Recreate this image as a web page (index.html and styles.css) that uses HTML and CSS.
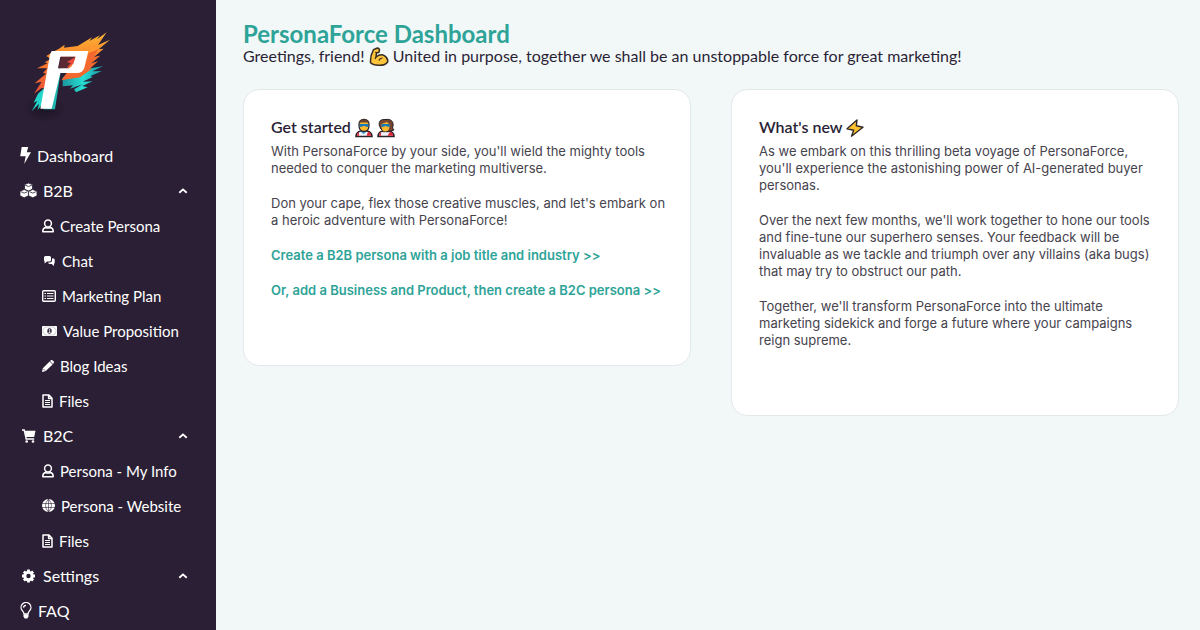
FILE: index.html
```html
<!DOCTYPE html>
<html lang="en">
<head>
<meta charset="utf-8">
<title>PersonaForce Dashboard</title>
<link rel="stylesheet" href="styles.css">
</head>
<body>
<svg class="defs" aria-hidden="true">
  <symbol id="person" viewBox="0 0 12 14"><g fill="none" stroke="currentColor" stroke-width="1.5"><circle cx="6" cy="4.500" r="3.400"/><path d="M3.600 8.500C1.600 8.900.8 10.200.8 12v.8h10.400V12c0-1.800-.8-3.100-2.800-3.500Q6 9.700 3.600 8.500z" stroke-linejoin="round"/></g></symbol>
  <symbol id="file" viewBox="0 0 11 14"><path d="M1 1h6l3 3.200V13H1zM6.600 1v3.500H10" fill="none" stroke="currentColor" stroke-width="1.500" stroke-linejoin="round"/><path d="M3 6.500h5M3 8.500h5M3 10.500h5" stroke="currentColor"/></symbol>
  <symbol id="chevron" viewBox="0 0 10 6"><path d="M1.300 4.700 5 1.400l3.700 3.300" fill="none" stroke="currentColor" stroke-width="1.900"/></symbol>
</svg>
<div class="app">
  <aside class="sidebar">
    <a class="logo" href="#" aria-label="PersonaForce">
      <svg width="100" height="105" viewBox="0 0 300 315">
        <defs>
          <linearGradient id="flame" x1="0" y1="0" x2="0" y2="1"><stop offset="0" stop-color="#fbb633"/><stop offset=".5" stop-color="#fb7a2c"/><stop offset="1" stop-color="#e94f37"/></linearGradient>
          <linearGradient id="teal" x1="0" y1="0" x2="1" y2="0"><stop offset="0" stop-color="#1c979c"/><stop offset=".5" stop-color="#26dfd3"/><stop offset="1" stop-color="#1a91a2"/></linearGradient>
          <radialGradient id="shade"><stop offset="0" stop-color="#15121f" stop-opacity=".8"/><stop offset="1" stop-color="#15121f" stop-opacity="0"/></radialGradient>
        </defs>
        <ellipse cx="75" cy="265" rx="65" ry="42" fill="url(#shade)"/>
        <path d="M128 172 184 150 250 138 217 154 246 153 211 168 218 171 188 185 218 184 187 198 203 202 168 217 162 208 188 193 150 206 159 196 128 199z" fill="url(#teal)"/>
        <path d="M72 205 54 221 41 248 52 243 35 274 57 251 53 270 69 250z" fill="#22d5ca"/>
        <path d="M79 108 98 96 117 86 134 74 132 83 173 78 216 52 208 63 240 46 231 58 260 37 234 75 270 59 236 88 251 86 221 112 240 107 211 132 233 124 205 150 218 145 179 172 124 181 136 164 154 143 140 145 158 127 140 133 158 122 164 110 111 110 83 206 65 204 42 221 65 185 44 190 78 161 69 158 82 145 51 145 83 130 74 127 92 117z" fill="url(#flame)"/>
        <path d="M205 95 244 52 217 87 232 82 196 135z" fill="#ff9d2e" opacity=".7"/>
        <path d="M99 100 121 163 105 268H70L93 107z" fill="#21b7b2"/>
        <path d="M205 100 235 88 221 112 240 107 211 132 233 124 205 150 218 145 179 172 130 176 193 145z" fill="#f3682f"/>
        <path fill-rule="evenodd" d="M95 93H205L193 143Q188 159 171 159H121L95 266H61L90 104zM121 110H167L161 126Q156 142 146 145H114z" fill="#fff"/>
        <path d="M123 110h43l-5 15-22 3 14 3-10 12-27 2z" fill="#5b2934"/>
        <path d="M140 127 165 112 160 131 139 143 153 129z" fill="#ed4a3e"/>
      </svg>
    </a>
    <nav class="nav" aria-label="Main">
      <a class="item" href="#"><svg width="11" height="17" viewBox="0 0 11 17"><path d="M1.700 0h6.500L6.800 5.300H11L4.200 17l1.500-7.700H.2z" fill="currentColor"/></svg>Dashboard</a>
      <button class="item" type="button" aria-expanded="true"><svg width="17" height="15" viewBox="0 0 17 15"><g fill="currentColor" stroke="#2b1f35" stroke-width=".8"><path d="m8.500 0 4 1.600v4.600l-4 1.900-4-1.900V1.600z"/><path d="m4.200 6.500 4.200 1.700v4.600l-4.200 2-4.200-2V8.200z"/><path d="m12.800 6.500 4.200 1.700v4.600l-4.200 2-4.200-2V8.200z"/><path d="m5 2 3.500 1.500L12 2M1 8.700l3.200 1.400 3.200-1.400M9.600 8.700l3.200 1.400L16 8.700" fill="none"/></g></svg>B2B<svg class="chevron" width="10" height="6"><use href="#chevron"/></svg></button>
      <div class="group">
        <a class="subitem" href="#"><svg width="12" height="14"><use href="#person"/></svg>Create Persona</a>
        <a class="subitem" href="#"><svg width="14" height="12" viewBox="0 0 14 12"><path d="M3.500 1h4Q9 1 9 2.500V5Q9 6.500 7.500 6.500H5L2.600 8.600V6.400Q2 6 2 5V2.500Q2 1 3.500 1z" fill="currentColor"/><path d="M10 3.500h1.300q1.400 0 1.400 1.400v2.500q0 1-.7 1.300V11L9.700 8.900H7.500Q6.200 8.900 6.200 7.500h1.700Q10 7.500 10 5.400z" fill="currentColor"/></svg>Chat</a>
        <a class="subitem" href="#"><svg width="14" height="12" viewBox="0 0 14 12"><rect x=".7" y=".7" width="12.600" height="10.600" rx="1" fill="none" stroke="currentColor" stroke-width="1.400"/><path d="M2.500 3.500H4M5 3.500h6.500M2.500 6H4M5 6h6.500M2.500 8.500H4M5 8.500h6.500" stroke="currentColor" stroke-width="1.200"/></svg>Marketing Plan</a>
        <a class="subitem" href="#"><svg width="15" height="10" viewBox="0 0 15 10"><rect width="15" height="10" rx=".8" fill="currentColor"/><path d="M1 3q1.600 0 2-2h9q.4 2 2 2v4q-1.600 0-2 2H3q-.4-2-2-2z" fill="none" stroke="#2b1f35" stroke-width=".5" opacity=".4"/><ellipse cx="7.500" cy="5" rx="2.200" ry="2.700" fill="#2b1f35"/><path d="M6.800 3.900l.9-.5v3M6.500 6.500h2" fill="none" stroke="currentColor" stroke-width=".8"/></svg>Value Proposition</a>
        <a class="subitem" href="#"><svg width="12" height="12" viewBox="0 0 12 12"><path d="m8 1 1-.8q.9-.5 1.700.2l.9.900q.7.800.1 1.700L10.900 4zM7.600 1.400l3 3-6.800 6.700L0 12l.8-3.800z" fill="currentColor"/><path d="m1.500 9 1.500 1.500" stroke="#2b1f35" stroke-width=".7"/></svg>Blog Ideas</a>
        <a class="subitem" href="#"><svg width="11" height="14"><use href="#file"/></svg>Files</a>
      </div>
      <button class="item" type="button" aria-expanded="true"><svg width="17" height="14" viewBox="0 0 17 14"><path d="M2 1h2.200l2 9h8" fill="none" stroke="currentColor" stroke-width="1.400"/><path d="M4.800 1.800h10.700L14.200 8H6z" fill="currentColor"/><circle cx="6.700" cy="12.500" r="1.300" fill="currentColor"/><circle cx="13" cy="12.500" r="1.300" fill="currentColor"/></svg>B2C<svg class="chevron" width="10" height="6"><use href="#chevron"/></svg></button>
      <div class="group">
        <a class="subitem" href="#"><svg width="12" height="14"><use href="#person"/></svg>Persona - My Info</a>
        <a class="subitem" href="#"><svg width="13" height="13" viewBox="0 0 13 13"><circle cx="6.500" cy="6.500" r="6.500" fill="currentColor"/><path d="M0 4.500h13M0 8.500h13M6.500 0v13M6.500 0Q.5 6.500 6.500 13 12.500 6.500 6.500 0" fill="none" stroke="#2b1f35" stroke-width=".6"/></svg>Persona - Website</a>
        <a class="subitem" href="#"><svg width="11" height="14"><use href="#file"/></svg>Files</a>
      </div>
      <button class="item" type="button" aria-expanded="true"><svg width="17" height="14" viewBox="0 0 17 14"><circle cx="8.500" cy="7" r="3.700" fill="none" stroke="currentColor" stroke-width="3"/><path d="M8.500 .5v3M8.500 10.500v3M2 7h3M12 7h3M3.900 2.400l2 2M11.100 9.600l2 2M13.100 2.400l-2 2M5.900 9.600l-2 2" stroke="currentColor" stroke-width="2.800"/></svg>Settings<svg class="chevron" width="10" height="6"><use href="#chevron"/></svg></button>
      <a class="item" href="#"><svg width="12" height="17" viewBox="0 0 12 17"><path d="M4 12Q3.800 10.300 2.300 8.600A4.900 4.900 0 1 1 9.700 8.600Q8.200 10.300 8 12zM3.500 5.600Q3.700 3.500 6 3.300" fill="none" stroke="currentColor" stroke-width="1.300"/><path d="M3.500 12.500h5v2L7.300 16.500H4.700L3.500 14.500z" fill="currentColor"/></svg>FAQ</a>
    </nav>
  </aside>
  <main class="main">
    <h1 class="title">PersonaForce Dashboard</h1>
    <p class="greeting">Greetings, friend! <svg class="emoji" role="img" aria-label="flexed arm" width="20" height="20" viewBox="0 0 20 20"><path d="M4.500 2.600 7.800 1.200Q10 .8 10.500 2.700L10.100 5Q9.300 6.100 7.500 5.700L7 10Q11.700 6.500 15.300 8.700 19.500 11.500 18.600 15 16.500 18.500 10 18.300 4.500 18.500 1.500 15.800 1 9 4.500 2.600z" fill="#fcc43b" stroke="#382d22" stroke-width="1.500" stroke-linejoin="round"/><path d="M7 10 6 12M10 13.500q1-2.500 3.500-2.500M7.500 5.700 6.400 5" fill="none" stroke="#382d22" stroke-width="1.200"/></svg> United in purpose, together we shall be an unstoppable force for great marketing!</p>
    <div class="cards">
      <section class="card">
        <h2 class="heading">Get started <svg class="emoji" role="img" aria-label="superhero" width="18" height="20" viewBox="0 0 18 20"><path d="M1 18.500Q1 14 6 13h6q5 1 5 5.500z" fill="#f4f4fa" stroke="#292329" stroke-width="1.600"/><path d="M16.200 17.700Q16 14.500 13 13.700l-1.500 4zM1.900 17.700Q2 15 4 14.200v3.500z" fill="#df2737"/><path d="M5 13.200h7l-3.500 3z" fill="#4fa6de"/><path d="M4 7Q3.800 1.500 9 1.300 14.200 1.500 14 7q0 6.500-5 6.500T4 7z" fill="#fbb92d" stroke="#292329" stroke-width="1.300"/><path d="M4 6Q4 1.500 9 1.500T14 6L12.500 4.500h-7z" fill="#67412e"/><path d="M4.600 6h8.800v3L10.500 8.500 9 7.700l-1.500.8-2.900.5z" fill="#1479b8"/></svg> <svg class="emoji" role="img" aria-label="superhero woman" width="18" height="20" viewBox="0 0 18 20"><path d="M1 18.500Q1 14 6 13h6q5 1 5 5.500z" fill="#f4f4fa" stroke="#292329" stroke-width="1.600"/><path d="M16.200 17.700Q16 14.500 13 13.700l-2.500 4zM1.900 17.700Q2 15 4 14.200v3.500z" fill="#df2737"/><path d="M2.200 7Q1.500 1 8 1.500q8-1.200 8.200 5.500l-.7 3 1.500 2-5.500 1.700h-5L3.800 11z" fill="#78452f" stroke="#292329"/><path d="M4.600 6 10 4l2.500 2.500q0 7-4 7T4.600 8z" fill="#fbb92d"/><path d="M4.600 6h8v3L10 8.500 8.500 7.700 7.500 8.500l-2.900.5z" fill="#1479b8"/></svg></h2>
        <div class="copy">
          <p>With PersonaForce by your side, you'll wield the mighty tools needed to conquer the marketing multiverse.</p>
          <p>Don your cape, flex those creative muscles, and let's embark on a heroic adventure with PersonaForce!</p>
          <p><a class="link" href="#">Create a B2B persona with a job title and industry &gt;&gt;</a></p>
          <p><a class="link" href="#">Or, add a Business and Product, then create a B2C persona &gt;&gt;</a></p>
        </div>
      </section>
      <section class="card">
        <h2 class="heading">What's new <svg class="emoji" role="img" aria-label="lightning" width="18" height="20" viewBox="0 0 18 20"><path d="M11 2 1 10.800l6.700 1.400-2.200 6L17 9.300l-6.700-1.500z" fill="#fcc32f" stroke="#332b2b" stroke-width="1.400" stroke-linejoin="round"/></svg></h2>
        <div class="copy">
          <p>As we embark on this thrilling beta voyage of PersonaForce, you'll experience the astonishing power of AI-generated buyer personas.</p>
          <p>Over the next few months, we'll work together to hone our tools and fine-tune our superhero senses. Your feedback will be invaluable as we tackle and triumph over any villains (aka bugs) that may try to obstruct our path.</p>
          <p>Together, we'll transform PersonaForce into the ultimate marketing sidekick and forge a future where your campaigns reign supreme.</p>
        </div>
      </section>
    </div>
  </main>
</div>
</body>
</html>
```
FILE: styles.css
```css
* { box-sizing: border-box; }
body { margin: 0; background: #f2f8f8; color: #2b1f35; font-family: Lato, sans-serif; }
p, h1, h2 { margin: 0; }
.defs { display: none; }
.app { display: flex; min-height: 100vh; }
.sidebar { flex: 0 0 216px; background: #2b1f35; color: #fff; }
.logo { display: block; padding: 20px 20px 13px; }
.logo svg { display: block; }
.nav { display: flex; flex-direction: column; }
.item, .subitem { display: flex; align-items: center; gap: 6px; height: 35px; color: #fff; text-decoration: none; }
.item { width: 100%; padding: 0 28px 0 20px; border: 0; background: none; font: 16px Lato, sans-serif; text-align: left; cursor: pointer; }
.subitem { padding-left: 42px; font-size: 15px; }
.chevron { margin-left: auto; }
.main { flex: 1; min-width: 0; padding: 20px 21px 20px 27px; }
.title { color: #2ea398; font-size: 24px; line-height: 28px; font-weight: 700; }
.greeting { font-size: 16px; line-height: 16px; }
.emoji { vertical-align: -5px; }
.greeting .emoji { margin: -4px 0; vertical-align: -1px; }
.cards { display: grid; grid-template-columns: 1fr 1fr; gap: 40px; align-items: start; margin-top: 25px; }
.card { padding: 25px 22px 66px 27px; background: #fff; border: 1px solid #e2e8ea; border-radius: 16px; }
.heading { font-size: 16px; line-height: 24px; font-weight: 600; }
.copy { display: flex; flex-direction: column; gap: 18px; margin-top: 4px; color: #46434d; font: 13px/17px Inter, sans-serif; }
.link { color: #2ea398; font-weight: 600; text-decoration: none; }
```
